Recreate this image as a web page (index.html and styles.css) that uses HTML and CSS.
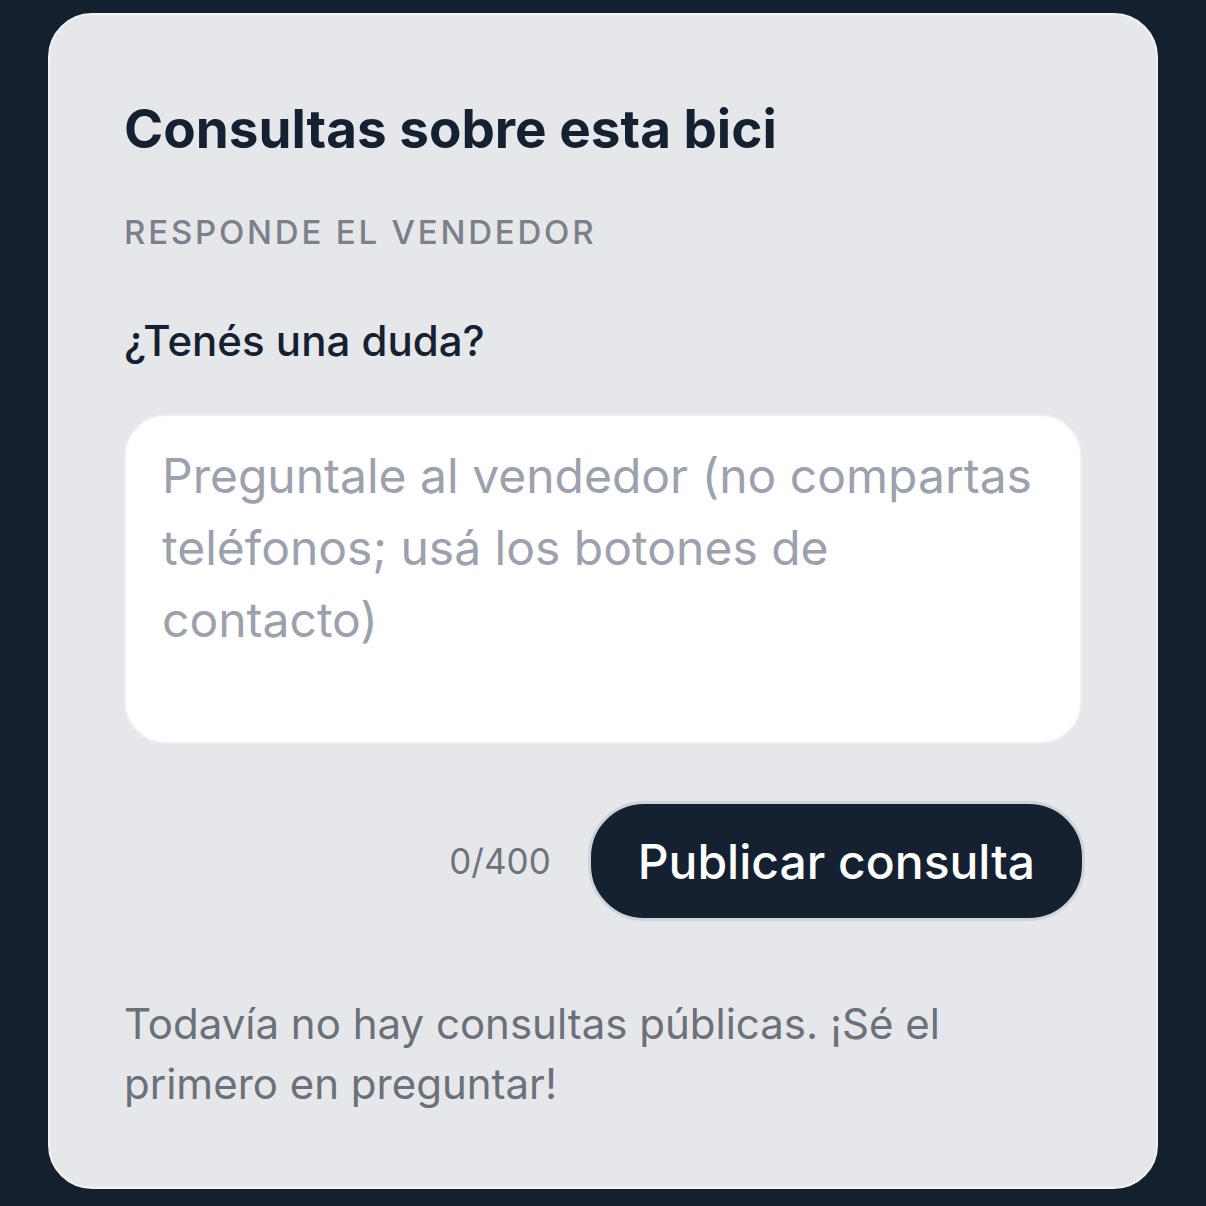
FILE: index.html
```html
<!DOCTYPE html>
<html lang="es">
<head>
<meta charset="utf-8">
<title>Consultas</title>
<link rel="stylesheet" href="styles.css">
</head>
<body>
<section class="card">
  <h2 class="title">Consultas sobre esta bici</h2>
  <p class="eyebrow">RESPONDE EL VENDEDOR</p>
  <label class="label" for="q">¿Tenés una duda?</label>
  <textarea id="q" class="input" placeholder="Preguntale al vendedor (no compartas teléfonos; usá los botones de contacto)"></textarea>
  <div class="actions">
    <span class="counter">0/400</span>
    <button class="btn" type="button">Publicar consulta</button>
  </div>
  <p class="empty">Todavía no hay consultas públicas. ¡Sé el primero en preguntar!</p>
</section>
</body>
</html>
```
FILE: styles.css
```css
html, body {
  margin: 0;
  padding: 0;
  background: #15202e;
}
body {
  font-family: Inter, "Noto Sans", sans-serif;
  padding: 13px 48px 0;
  height: 1206px;
  box-sizing: border-box;
}
.card {
  box-sizing: border-box;
  height: 1176px;
  background: #e6e7ea;
  border: 2px solid #f1f2f4;
  border-radius: 44px;
  padding: 82px 74px 0;
  display: flex;
  flex-direction: column;
}
.title {
  margin: 0;
  font-size: 53px;
  font-weight: 700;
  line-height: 64px;
  color: #152130;
  letter-spacing: 0;
}
.eyebrow {
  margin: 51px 0 0;
  font-size: 33px;
  line-height: 40px;
  font-weight: 500;
  letter-spacing: 2.8px;
  color: #7b8089;
}
.label {
  margin-top: 64px;
  font-size: 42px;
  line-height: 50px;
  font-weight: 500;
  color: #152130;
}
.input {
  margin-top: 48px;
  box-sizing: border-box;
  width: 100%;
  height: 330px;
  background: #ffffff;
  border: 2px solid #eef0f2;
  border-radius: 42px;
  padding: 24px 34px 21px 36px;
  font-family: inherit;
  font-size: 48px;
  line-height: 72px;
  color: #152130;
  resize: none;
  outline: none;
}
.input::placeholder {
  color: #9ca1ad;
}
.actions {
  margin-top: 57px;
  display: flex;
  justify-content: flex-end;
  align-items: center;
  gap: 37px;
}
.counter {
  font-size: 35px;
  color: #6f747c;
}
.btn {
  box-sizing: border-box;
  height: 120px;
  padding: 0 47px;
  border-radius: 56px;
  background: #152130;
  border: 3px solid #cfd4da;
  color: #ffffff;
  font-family: inherit;
  font-size: 48px;
  font-weight: 500;
  margin-right: -3px;
}
.empty {
  margin: 73px 0 0;
  font-size: 42px;
  line-height: 60px;
  color: #6b7079;
}
```
